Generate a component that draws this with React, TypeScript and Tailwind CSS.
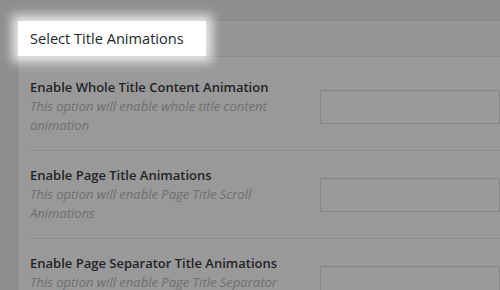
const rows = [
  {
    title: "Enable Whole Title Content Animation",
    desc: "This option will enable whole title content animation",
  },
  {
    title: "Enable Page Title Animations",
    desc: "This option will enable Page Title Scroll Animations",
  },
  {
    title: "Enable Page Separator Title Animations",
    desc: "This option will enable Page Title Separator Animations",
  },
];

export default function App() {
  return (
    <div
      className="w-[500px] h-[290px] overflow-hidden bg-[#8e8e8e] pt-[20px] pl-[17px]"
      style={{ fontFamily: '"Open Sans", "Liberation Sans", sans-serif' }}
    >
      <div className="h-full border-t border-l border-[#898989] bg-[#999999]">
        <div className="h-[36px] flex bg-[#959595] border-b border-[#8a8a8a]">
          <div className="relative w-[188px] h-full bg-white pl-[12px] flex items-center shadow-[0_0_10px_6px_rgba(255,255,255,0.8)]">
            <span className="text-[14.6px] text-[#23282d]">Select Title Animations</span>
          </div>
        </div>
        <div className="pt-[6px]">
          {rows.map((r) => (
            <div key={r.title} className="ml-[12px] flex items-center border-b border-[#8c8c8c] py-[15px]">
              <div className="w-[290px] shrink-0">
                <div className="text-[13px] leading-[19px] font-semibold text-[#1f2428]">{r.title}</div>
                <div className="text-[13px] leading-[19px] italic text-[#6f6f6f] w-[270px]">{r.desc}</div>
              </div>
              <div className="flex-1 h-[34px] border border-[#868686] bg-[#9a9a9a]" />
            </div>
          ))}
        </div>
      </div>
    </div>
  );
}
